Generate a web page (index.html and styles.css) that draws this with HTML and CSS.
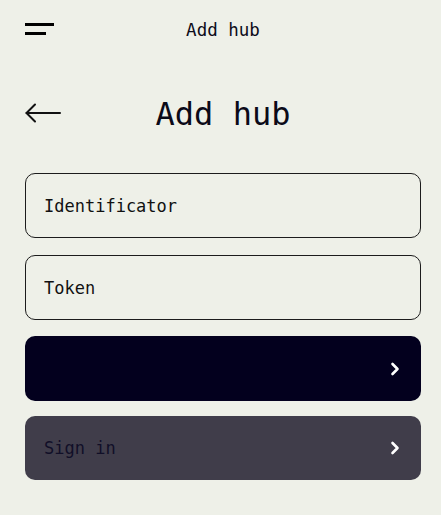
FILE: index.html
```html
<!DOCTYPE html>
<html lang="en">
<head>
<meta charset="utf-8">
<title>Add hub</title>
<link rel="stylesheet" href="styles.css">
</head>
<body>
<div class="page">
  <header class="topbar">
    <div class="burger"><span class="line long"></span><span class="line short"></span></div>
    <div class="topbar-title">Add hub</div>
    <div class="spacer"></div>
  </header>
  <div class="title-row">
    <svg class="back" width="36" height="20" viewBox="0 0 36 20" fill="none" stroke="#111" stroke-width="2" stroke-linecap="round" stroke-linejoin="round">
      <path d="M1.5 10 H35"/>
      <path d="M10 1.5 L1.5 10 L10 18.5"/>
    </svg>
    <h1 class="title">Add hub</h1>
    <div class="back-spacer"></div>
  </div>
  <form class="form">
    <input class="field" type="text" placeholder="Identificator">
    <input class="field" type="text" placeholder="Token">
    <button class="btn btn-primary" type="button"><span class="btn-label"></span>
      <svg class="chev" width="10" height="14" viewBox="0 0 10 14" fill="none" stroke="#fff" stroke-width="2.6" stroke-linecap="round" stroke-linejoin="round"><path d="M2.5 2 L7.5 7 L2.5 12"/></svg>
    </button>
    <button class="btn btn-secondary" type="button"><span class="btn-label">Sign in</span>
      <svg class="chev" width="10" height="14" viewBox="0 0 10 14" fill="none" stroke="#fff" stroke-width="2.6" stroke-linecap="round" stroke-linejoin="round"><path d="M2.5 2 L7.5 7 L2.5 12"/></svg>
    </button>
  </form>
</div>
</body>
</html>
```

FILE: styles.css
```css
* { box-sizing: border-box; }
html, body {
  margin: 0;
  padding: 0;
  background: #eef0e8;
  font-family: "DejaVu Sans Mono", "Liberation Mono", monospace;
  color: #0d0c1a;
}
.page {
  padding: 18px 20px 0 25px;
}
.topbar {
  display: flex;
  align-items: flex-start;
  height: 24px;
}
.burger {
  width: 29px;
  display: flex;
  flex-direction: column;
  gap: 6px;
  margin-top: 5px;
}
.line {
  display: block;
  height: 3px;
  background: #000;
}
.line.long { width: 29px; }
.line.short { width: 21px; }
.topbar-title {
  flex: 1;
  text-align: center;
  font-size: 17.5px;
  line-height: 24px;
}
.spacer { width: 29px; }
.title-row {
  display: flex;
  align-items: flex-start;
  margin-top: 52px;
  height: 40px;
}
.back {
  display: block;
  margin-top: 9px;
  flex: none;
}
.title {
  flex: 1;
  margin: 0;
  text-align: center;
  font-weight: normal;
  font-size: 32px;
  line-height: 40px;
  color: #0b0a18;
}
.back-spacer { width: 36px; }
.form {
  margin-top: 39px;
  display: flex;
  flex-direction: column;
  gap: 16px;
  width: 396px;
}
.field {
  display: block;
  width: 100%;
  height: 65px;
  border: 1px solid #1c1c1c;
  border-radius: 10px;
  background: transparent;
  padding: 0 18px;
  font-family: inherit;
  font-size: 17px;
  color: #111;
  outline: none;
}
.field::placeholder { color: #111; opacity: 1; }
.field:first-child { margin-bottom: 1px; }
.btn {
  display: flex;
  align-items: center;
  justify-content: space-between;
  width: 100%;
  height: 65px;
  border: none;
  border-radius: 10px;
  padding: 0 21px 0 19px;
  font-family: inherit;
  font-size: 17px;
  text-align: left;
  cursor: pointer;
}
.btn-primary { background: #03001e; color: #fff; }
.btn-secondary { background: #403d4a; color: #110f28; height: 64px; margin-top: -1px; }
.chev { display: block; flex: none; }
```
